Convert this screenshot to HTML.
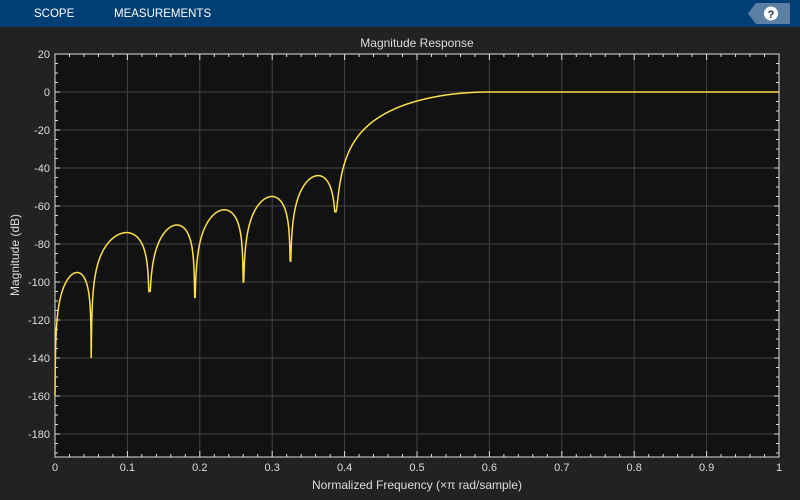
<!DOCTYPE html>
<html><head><style>
body{margin:0;width:800px;height:500px;background:#222;overflow:hidden;font-family:"Liberation Sans",sans-serif}
#hdr{position:absolute;left:0;top:0;width:800px;height:27px;background:#003f74}
#hdr span{position:absolute;top:8px;color:#fff;font-size:11.5px}
svg{position:absolute;left:0;top:0}
</style></head><body>
<div id="hdr"><span style="left:34px">SCOPE</span><span style="left:114px">MEASUREMENTS</span>
<svg width="800" height="27" style="position:absolute;left:0;top:0"><polygon points="756,3 790,3 790,24 756,24 748,13.5" fill="#5c80a3"/><circle cx="771" cy="13.5" r="7" fill="#fff"/><text x="771" y="18" fill="#1a2a40" font-size="11" font-weight="bold" text-anchor="middle" font-family="Liberation Sans">?</text></svg></div>
<svg id="p" width="800" height="500" style="top:0"></svg>
<script>
var X=f=>55+f*724,Y=d=>54+(20-d)*1.9;
var s='<rect x="55" y="54" width="724" height="403" fill="#121212"/>';
for(var i=1;i<10;i++)s+='<line x1="'+X(i/10)+'" y1="54" x2="'+X(i/10)+'" y2="457" stroke="#444" stroke-width="1"/>';
for(var d=0;d>=-180;d-=20)s+='<line x1="55" y1="'+Y(d)+'" x2="779" y2="'+Y(d)+'" stroke="#444" stroke-width="1"/>';
for(var i=0;i<=50;i++){var x=X(i/50);s+='<line x1="'+x+'" y1="457" x2="'+x+'" y2="'+(i%5?454:451)+'" stroke="#ddd"/><line x1="'+x+'" y1="54" x2="'+x+'" y2="'+(i%5?57:60)+'" stroke="#ddd"/>';}
for(var d=20;d>=-190;d-=5){var y=Y(d);var m=d%20==0?5:3;s+='<line x1="55" y1="'+y+'" x2="'+(55+m)+'" y2="'+y+'" stroke="#ddd"/><line x1="779" y1="'+y+'" x2="'+(779-m)+'" y2="'+y+'" stroke="#ddd"/>';}
s+='<rect x="55" y="54" width="724" height="403" fill="none" stroke="#ddd" stroke-width="1"/>';
for(var i=0;i<=10;i++)s+='<text x="'+X(i/10)+'" y="471" fill="#ddd" font-size="11" text-anchor="middle">'+(i==0?'0':i==10?'1':'0.'+i)+'</text>';
for(var d=20;d>=-180;d-=20)s+='<text x="50" y="'+(Y(d)+4)+'" fill="#ddd" font-size="11" text-anchor="end">'+d+'</text>';
s+='<text x="417" y="47" fill="#ddd" font-size="12" text-anchor="middle">Magnitude Response</text>';
s+='<text x="417" y="489" fill="#ddd" font-size="12" text-anchor="middle">Normalized Frequency (×π rad/sample)</text>';
s+='<text transform="translate(19,255) rotate(-90)" fill="#ddd" font-size="12" text-anchor="middle">Magnitude (dB)</text>';
var nulls=[[0,-160],[0.05,-140],[0.13,-105],[0.193,-108],[0.26,-100],[0.325,-89],[0.388,-63]];
var peaks=[-95,-74,-70,-62,-55,-44];
function db(f){
 if(f>=0.388){var t=Math.min(1,(f-0.388)/0.212);var a=Math.pow(Math.sin(Math.PI/2*t),1.8)+0.0007;return 20*Math.log10(Math.min(1,a));}
 for(var k=0;k<6;k++){var a0=nulls[k][0],b0=nulls[k+1][0];if(f<=b0){var u=(f-a0)/(b0-a0);u=Math.pow(u,1.4);var A=Math.pow(10,peaks[k]/20);var v=A*Math.sin(Math.PI*u);var dv=20*Math.log10(Math.abs(v)+1e-12);var lim=u<0.5?nulls[k][1]:nulls[k+1][1];return Math.max(lim,dv);}}
}
var p='';for(var i=0;i<=3000;i++){var f=i/3000;p+=(i?'L':'M')+X(f).toFixed(2)+','+Y(db(f)).toFixed(2);}
s+='<path d="'+p+'" fill="none" stroke="#ffe04a" stroke-width="1.5"/>';
document.getElementById('p').innerHTML=s;
</script>
</body></html>
